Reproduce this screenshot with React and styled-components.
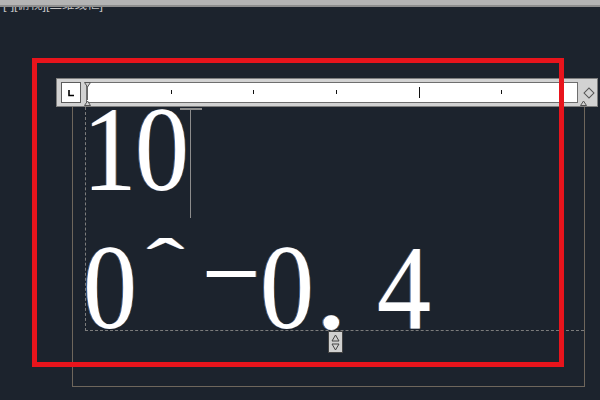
import React from 'react'
import styled, {createGlobalStyle} from 'styled-components'

const Global = createGlobalStyle`
    html, body {margin: 0; padding: 0; background: #1c232d;}
    #root {width: 600px; height: 400px; overflow: hidden;}
`

const Screen = styled.div`
    position: relative;
    width: 600px;
    height: 400px;
    background: #1c232d;
    overflow: hidden;
    font-family: "Liberation Sans", "Noto Sans CJK SC", sans-serif;
`
const TopStrip = styled.div`
    position: relative;
    z-index: 1;
    height: 5px;
    background: #b4b4b4;
    border-bottom: 2px solid #8e8e8e;
`
const Viewport = styled.div`
    display: flow-root;
    position: relative;
    overflow: hidden;
    height: 393px;
`
const ViewLabel = styled.div`
    margin-top: -8px;
    margin-left: 3px;
    height: 12px;
    line-height: 12px;
    font-size: 12.5px;
    color: #c4c4c4;
    white-space: pre;
`
const Editor = styled.div`
    margin-top: 67px;
    margin-left: 56px;
`
const Ruler = styled.div`
    position: relative;
    box-sizing: border-box;
    width: 542px;
    height: 29px;
    padding: 3px 4px 0 4px;
    display: flex;
    align-items: flex-start;
    gap: 5px;
    background: #d2d2d2;
    border: 1px solid #7e7e7e;
`
const TabBox = styled.div`
    box-sizing: border-box;
    width: 20px;
    height: 21px;
    background: #fff;
    border: 1px solid #5c5c5c;
    display: flex;
    align-items: center;
    justify-content: center;
`
const Strip = styled.div`
    position: relative;
    box-sizing: border-box;
    width: 497px;
    height: 21px;
    background: #fff;
    border: 1px solid #6e6e6e;
`
const Tick = styled.div`
    position: absolute;
    width: 1px;
    background: #111;
    left: ${p => p.$x}px;
    top: ${p => p.$tall ? 4 : 7}px;
    height: ${p => p.$tall ? 11 : 4}px;
`
const Diamond = styled.div`
    align-self: center;
    margin-top: -3px;
    margin-left: 2px;
    width: 6px;
    height: 6px;
    border: 1px solid #555;
    transform: rotate(45deg);
`
const Markers = styled.svg`
    position: absolute;
    left: 0;
    top: 0;
    overflow: visible;
`
const Frame = styled.div`
    display: flow-root;
    box-sizing: border-box;
    margin-left: 16px;
    width: 513px;
    height: 280px;
    border: 1px solid #6e665c;
    border-top: none;
`
const TextBox = styled.div`
    display: flow-root;
    position: relative;
    box-sizing: border-box;
    margin-left: 12px;
    height: 224px;
    border-left: 1px dashed #7c7c7c;
    border-bottom: 1px dashed #7c7c7c;
`
const GlyphRow = styled.div`
    display: flex;
    height: 138px;
    line-height: 138px;
    margin-left: -6px;
    margin-top: ${p => p.$first ? -26 : 0}px;
    font-family: "Liberation Serif", "Times New Roman", serif;
    font-size: 120px;
    color: #fff;
    white-space: pre;
    text-shadow: -1px 0 rgba(90, 160, 255, 0.55), 1px 0 rgba(220, 140, 60, 0.55);
`
const Glyph = styled.span`
    flex-shrink: 0;
    width: ${p => p.$w}px;
    text-align: center;
    transform-origin: 50% ${p => p.$oy || 50}%;
    transform: translate(${p => p.$dx || 0}px, ${p => p.$dy || 0}px) scale(${p => p.$sx || 0.9}, ${p => p.$sy || 1});
`
const Caret = styled.div`
    position: absolute;
    left: 104px;
    top: 1px;
    width: 1px;
    height: 110px;
    background: #8c8c8c;
    &::before {
        content: '';
        position: absolute;
        left: -10px;
        top: 0;
        width: 22px;
        height: 2px;
        background: #8c8c8c;
    }
`
const Spinner = styled.div`
    position: absolute;
    left: 242px;
    top: 224px;
    box-sizing: border-box;
    width: 15px;
    height: 22px;
    background: #d0d0d0;
    border: 1px solid #444;
    display: flex;
    flex-direction: column;
    align-items: center;
    justify-content: center;
    gap: 1px;
`
const Highlight = styled.div`
    position: absolute;
    left: 32px;
    top: 58px;
    box-sizing: border-box;
    width: 532px;
    height: 309px;
    border: 5px solid #e8141c;
    pointer-events: none;
`

const line1 = [
    {c: '1', w: 52},
    {c: '0', w: 59},
]
const line2 = [
    {c: '0', w: 59},
    {c: 'ˆ', w: 59, dx: -3, dy: -24, sx: 0.95, sy: 0.6},
    {c: '−', w: 59, dy: -14, sx: 0.87},
    {c: '0', w: 59},
    {c: '.', w: 27, sx: 1.1, sy: 1.05, oy: 76},
    {c: ' ', w: 31},
    {c: '4', w: 59},
]
const ticks = [84, 166, 249, 332, 414]

const renderLine = (glyphs) => glyphs.map((g, i) => (
    <Glyph key={i} $w={g.w} $dx={g.dx} $dy={g.dy} $sx={g.sx} $sy={g.sy} $oy={g.oy}>{g.c}</Glyph>
))

export default function App() {
    return (
        <Screen>
            <Global />
            <TopStrip />
            <Viewport>
                <ViewLabel>[-][俯视][二维线框]</ViewLabel>
                <Editor>
                    <Ruler>
                        <TabBox>
                            <svg width="8" height="8" viewBox="0 0 8 8">
                                <path d="M2 1 V6.5 H7" stroke="#000" strokeWidth="1.6" fill="none" />
                            </svg>
                        </TabBox>
                        <Strip>
                            {ticks.map((x, i) => <Tick key={i} $x={x} $tall={i === 3} />)}
                        </Strip>
                        <Diamond />
                        <Markers width="542" height="29">
                            <path d="M27.5 3.5 H33.5 L30.5 8 Z" fill="#cfcfcf" stroke="#555" strokeWidth="1" />
                            <line x1="30.5" y1="8" x2="30.5" y2="21" stroke="#666" strokeWidth="1" />
                            <path d="M27.5 26.5 H33.5 L30.5 22 Z" fill="#cfcfcf" stroke="#555" strokeWidth="1" />
                            <path d="M523.5 26.5 H529.5 L526.5 22 Z" fill="#cfcfcf" stroke="#555" strokeWidth="1" />
                        </Markers>
                    </Ruler>
                    <Frame>
                        <TextBox>
                            <GlyphRow $first>{renderLine(line1)}</GlyphRow>
                            <GlyphRow>{renderLine(line2)}</GlyphRow>
                            <Caret />
                            <Spinner>
                                <svg width="9" height="8" viewBox="0 0 9 8">
                                    <path d="M4.5 1 L8 7 H1 Z" fill="none" stroke="#444" strokeWidth="1" />
                                </svg>
                                <svg width="9" height="8" viewBox="0 0 9 8">
                                    <path d="M4.5 7 L8 1 H1 Z" fill="none" stroke="#444" strokeWidth="1" />
                                </svg>
                            </Spinner>
                        </TextBox>
                    </Frame>
                </Editor>
            </Viewport>
            <Highlight />
        </Screen>
    )
}
